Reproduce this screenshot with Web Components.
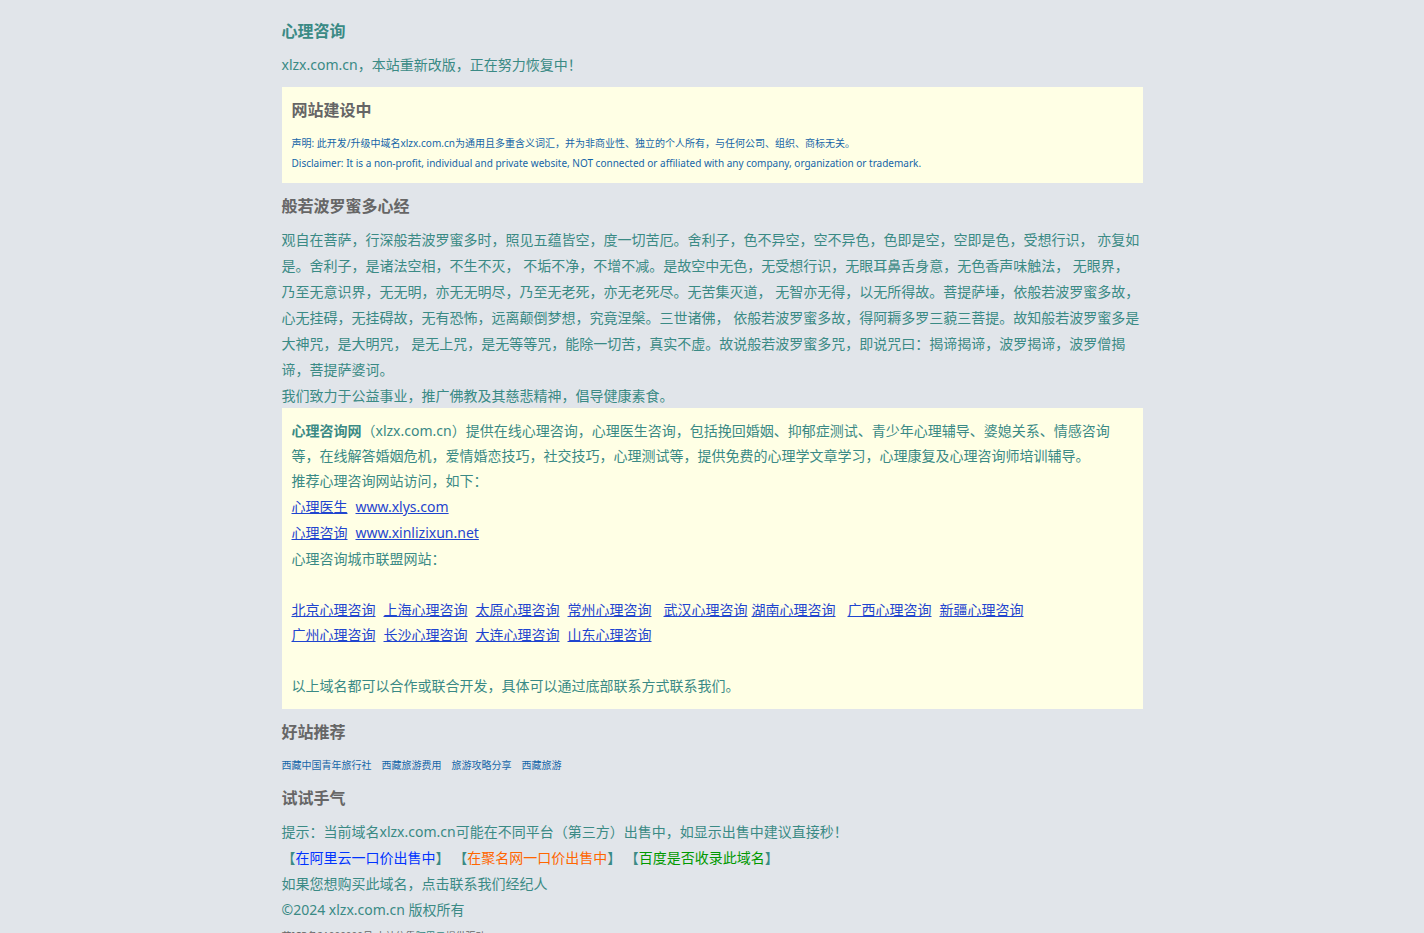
<!DOCTYPE html>
<html lang="zh-CN">
<head>
<meta charset="utf-8">
<meta name="viewport" content="width=device-width, initial-scale=1">
<title>心理咨询</title>
<style>
  body {
    margin: 8px;
    background: #e1e5ea;
    color: #3a8a85;
    font: 14px/26px "Noto Sans", "Noto Sans CJK SC", sans-serif;
    text-spacing-trim: space-all;
  }
</style>
</head>
<body>
<xl-page>
  <xl-heading level="1">心理咨询</xl-heading>
  <xl-text intro>xlzx.com.cn，本站重新改版，正在努力恢复中！</xl-text>
  <xl-notice>
    <xl-heading inset>网站建设中</xl-heading>
    <xl-small>声明: 此开发/升级中域名xlzx.com.cn为通用且多重含义词汇，并为非商业性、独立的个人所有，与任何公司、组织、商标无关。</xl-small>
    <xl-small>Disclaimer: It is a non-profit, individual and private website, NOT connected or affiliated with any company, organization or trademark.</xl-small>
  </xl-notice>
  <xl-heading>般若波罗蜜多心经</xl-heading>
  <xl-text>观自在菩萨，行深般若波罗蜜多时，照见五蕴皆空，度一切苦厄。舍利子，色不异空，空不异色，色即是空，空即是色，受想行识， 亦复如是。舍利子，是诸法空相，不生不灭， 不垢不净，不增不减。是故空中无色，无受想行识，无眼耳鼻舌身意，无色香声味触法， 无眼界，乃至无意识界，无无明，亦无无明尽，乃至无老死，亦无老死尽。无苦集灭道， 无智亦无得，以无所得故。菩提萨埵，依般若波罗蜜多故，心无挂碍，无挂碍故，无有恐怖，远离颠倒梦想，究竟涅槃。三世诸佛， 依般若波罗蜜多故，得阿耨多罗三藐三菩提。故知般若波罗蜜多是大神咒，是大明咒， 是无上咒，是无等等咒，能除一切苦，真实不虚。故说般若波罗蜜多咒，即说咒曰：揭谛揭谛，波罗揭谛，波罗僧揭谛，菩提萨婆诃。</xl-text>
  <xl-text tight>我们致力于公益事业，推广佛教及其慈悲精神，倡导健康素食。</xl-text>
  <xl-notice>
    <xl-text tight><b>心理咨询网</b>（xlzx.com.cn）提供在线心理咨询，心理医生咨询，包括挽回婚姻、抑郁症测试、青少年心理辅导、婆媳关系、情感咨询等，在线解答婚姻危机，爱情婚恋技巧，社交技巧，心理测试等，提供免费的心理学文章学习，心理康复及心理咨询师培训辅导。</xl-text>
    <xl-text>推荐心理咨询网站访问，如下：</xl-text>
    <xl-link-row><xl-link>心理医生</xl-link><xl-link>www.xlys.com</xl-link></xl-link-row>
    <xl-link-row><xl-link>心理咨询</xl-link><xl-link>www.xinlizixun.net</xl-link></xl-link-row>
    <xl-text>心理咨询城市联盟网站：</xl-text>
    <xl-text tight spaced>
      <xl-link-row gap="wide">
        <xl-link-row><xl-link>北京心理咨询</xl-link><xl-link>上海心理咨询</xl-link><xl-link>太原心理咨询</xl-link><xl-link>常州心理咨询</xl-link></xl-link-row>
        <xl-link-row gap="narrow"><xl-link>武汉心理咨询</xl-link><xl-link>湖南心理咨询</xl-link></xl-link-row>
        <xl-link-row><xl-link>广西心理咨询</xl-link><xl-link>新疆心理咨询</xl-link></xl-link-row>
      </xl-link-row>
      <xl-link-row><xl-link>广州心理咨询</xl-link><xl-link>长沙心理咨询</xl-link><xl-link>大连心理咨询</xl-link><xl-link>山东心理咨询</xl-link></xl-link-row>
    </xl-text>
    <xl-text>以上域名都可以合作或联合开发，具体可以通过底部联系方式联系我们。</xl-text>
  </xl-notice>
  <xl-heading>好站推荐</xl-heading>
  <xl-site-list>
    <xl-link kind="plain">西藏中国青年旅行社</xl-link>
    <xl-link kind="plain">西藏旅游费用</xl-link>
    <xl-link kind="plain">旅游攻略分享</xl-link>
    <xl-link kind="plain">西藏旅游</xl-link>
  </xl-site-list>
  <xl-heading>试试手气</xl-heading>
  <xl-text>提示：当前域名xlzx.com.cn可能在不同平台（第三方）出售中，如显示出售中建议直接秒！</xl-text>
  <xl-text>【<xl-link kind="blue">在阿里云一口价出售中</xl-link>】 【<xl-link kind="orange">在聚名网一口价出售中</xl-link>】 【<xl-link kind="green">百度是否收录此域名</xl-link>】</xl-text>
  <xl-text><xl-link kind="plain">如果您想购买此域名，点击联系我们经纪人</xl-link></xl-text>
  <xl-text>©2024 xlzx.com.cn 版权所有</xl-text>
  <xl-small footer>藏ICP备21000000号 本站依靠<xl-link kind="teal">阿里云</xl-link>提供驱动</xl-small>
</xl-page>
<script>
  function define(name, css, markup) {
    customElements.define(name, class extends HTMLElement {
      constructor() {
        super();
        this.attachShadow({ mode: "open" }).innerHTML = `<style>${css}</style>${markup(this)}`;
      }
    });
  }

  define("xl-page",
    `:host { display: block; }
     main { max-width: 861px; margin: 0 auto; display: flow-root; }`,
    () => `<main><slot></slot></main>`);

  define("xl-heading",
    `:host { display: block; margin: 10px 0 8px; color: #666; }
     :host([level="1"]) { color: inherit; }
     :host([inset]) { margin: 0 0 10px; }
     h1, h2 { margin: 0; font-size: 16px; line-height: 26px; font-weight: bold; }`,
    el => {
      const tag = el.getAttribute("level") === "1" ? "h1" : "h2";
      return `<${tag}><slot></slot></${tag}>`;
    });

  define("xl-text",
    `:host { display: block; }
     :host([intro]) { margin-bottom: 9px; }
     :host([tight]) { line-height: 25px; }
     :host([spaced]) { margin: 25px 0 26px; }
     div { margin: 0; }`,
    () => `<div><slot></slot></div>`);

  define("xl-small",
    `:host { display: block; color: #1565a8; }
     :host([footer]) { color: #666; margin-top: 3px; }
     p { margin: 0; font-size: 10px; line-height: 20px; }`,
    () => `<p><slot></slot></p>`);

  define("xl-notice",
    `:host { display: block; }
     section { background: #ffffe5; padding: 10px; }`,
    () => `<section><slot></slot></section>`);

  define("xl-link",
    `:host { display: inline; }
     a { color: #1f45cf; text-decoration: underline; }
     :host([kind]) a { text-decoration: none; }
     :host([kind="plain"]) a { color: inherit; }
     :host([kind="blue"]) a { color: #0033ff; }
     :host([kind="orange"]) a { color: #ff6600; }
     :host([kind="green"]) a { color: #009900; }
     :host([kind="teal"]) a { color: #3a8a85; }`,
    () => `<a href="#"><slot></slot></a>`);

  define("xl-link-row",
    `:host { display: flex; flex-wrap: wrap; column-gap: 8px; }
     :host([gap="wide"]) { column-gap: 12px; }
     :host([gap="narrow"]) { column-gap: 4px; }`,
    () => `<slot></slot>`);

  define("xl-site-list",
    `:host { display: block; color: #1565a8; margin: 10px 0; }
     nav { display: flex; flex-wrap: wrap; gap: 0 10px; font-size: 10px; line-height: 20px; }`,
    () => `<nav><slot></slot></nav>`);
</script>
</body>
</html>
